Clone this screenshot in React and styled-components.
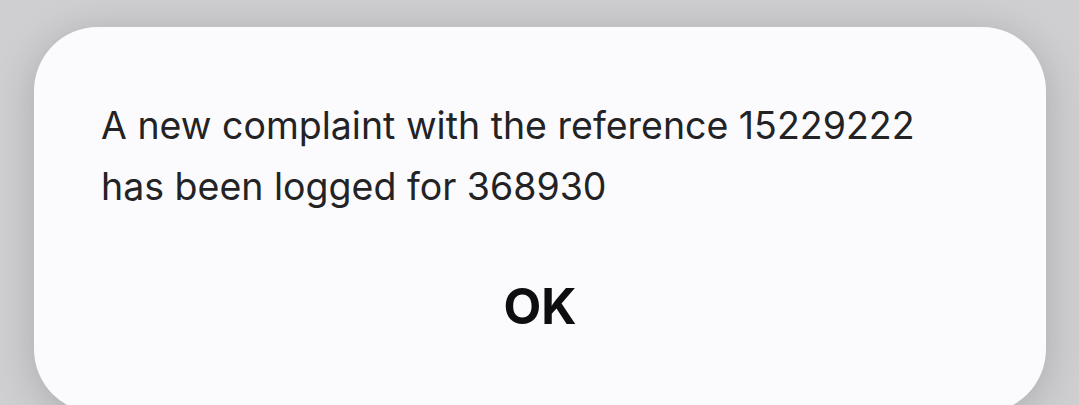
import React from "react"
import styled, {createGlobalStyle} from "styled-components"

const GlobalStyle = createGlobalStyle`
    html, body {
        margin: 0;
        padding: 0;
        background: #cfcfd1;
        overflow: hidden;
    }
`

const Screen = styled.div`
    width: 1079px;
    height: 405px;
    padding: 27px 33px 0 34px;
    box-sizing: border-box;
    font-family: Inter, Roboto, sans-serif;
    overflow: hidden;
`

const Dialog = styled.div`
    height: 386px;
    background: #fbfbfd;
    border-radius: 64px;
    box-shadow: 0 6px 40px rgba(0, 0, 0, 0.18);
    padding: 68px 67px 0 67px;
    box-sizing: border-box;
    display: flex;
    flex-direction: column;
`

const Message = styled.p`
    margin: 0;
    font-size: 37.5px;
    line-height: 61px;
    color: #232325;
`

const Actions = styled.div`
    display: flex;
    justify-content: center;
    margin-top: 65px;
`

const OkButton = styled.button`
    border: none;
    background: none;
    font-family: inherit;
    font-size: 49px;
    line-height: 1;
    font-weight: 650;
    color: #0e0e10;
    padding: 0;
    cursor: pointer;
`

export default function App(){
    return(
        <Screen>
            <GlobalStyle />
            <Dialog>
                <Message>
                    A new complaint with the reference 15229222<br />
                    has been logged for 368930
                </Message>
                <Actions>
                    <OkButton>OK</OkButton>
                </Actions>
            </Dialog>
        </Screen>
    )
}
